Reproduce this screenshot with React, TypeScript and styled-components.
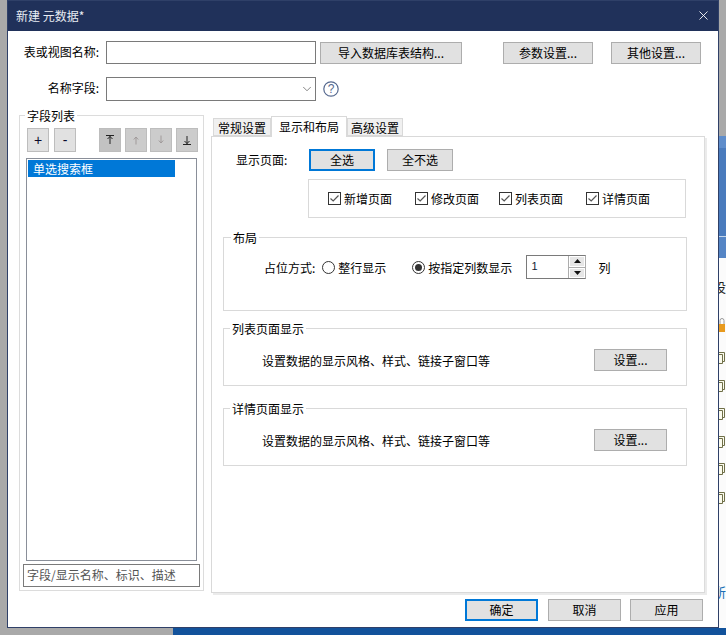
import React from 'react';
import styled, { createGlobalStyle } from 'styled-components';
import { X, ChevronDown } from 'lucide-react';

const Global = createGlobalStyle`
  html, body { margin: 0; padding: 0; width: 726px; height: 635px; overflow: hidden; background: #a9a9a9; }
  * { box-sizing: border-box; }
  body { font-family: "Noto Sans CJK SC", "Liberation Sans", sans-serif; font-size: 12px; color: #000; }
`;

const Desktop = styled.div`
  position: relative;
  width: 726px;
  height: 635px;
  background: #a9a9a9;
  overflow: hidden;
`;
const BottomBar = styled.div`
  position: absolute;
  left: 173px;
  right: 0;
  bottom: 0;
  height: 8px;
  background: #12529b;
`;
const SideStrip = styled.div`
  position: absolute;
  left: 719px;
  top: 136px;
  width: 7px;
  height: 492px;
  background: #fbfbfb;
  overflow: hidden;
  display: flex;
  flex-direction: column;
  align-items: flex-start;
`;
const SideTabs = styled.div`
  height: 12px;
  flex: none;
  width: 100%;
  background: #5f8dcb;
`;
const SideHeader = styled.div`
  height: 110px;
  flex: none;
  width: 100%;
  background: #4a7bbd;
  box-shadow: inset 0 -21px 0 #5585c5, inset 0 -22px 0 #c5d6ea;
`;
const SideGlyph = styled.span<{ $mt: number; $color: string }>`
  flex: none;
  margin: ${(p) => p.$mt}px 0 0 -6px;
  font-size: 13px;
  line-height: 14px;
  color: ${(p) => p.$color};
`;
const SideIcon = styled.svg<{ $mt: number }>`
  flex: none;
  margin-top: ${(p) => p.$mt}px;
`;

const Dialog = styled.div`
  position: absolute;
  left: 7px;
  top: 0;
  width: 712px;
  height: 628px;
  background: #fff;
  border: 1px solid #2f4068;
  display: flex;
  flex-direction: column;
`;
const TitleBar = styled.div`
  height: 30px;
  flex: none;
  background: #20315a;
  color: #e8ecf3;
  display: flex;
  align-items: center;
  justify-content: space-between;
  padding: 0 7px 2px 8px;
  font-size: 12px;
`;
const Body = styled.div`
  flex: 1;
  display: flex;
  flex-direction: column;
  padding: 10px 0 0 11px;
`;
const Row = styled.div<{ $h: number; $gap?: number }>`
  display: flex;
  align-items: center;
  height: ${(p) => p.$h}px;
  margin-bottom: ${(p) => p.$gap ?? 0}px;
`;
const FieldLabel = styled.label`
  width: 80px;
  text-align: right;
  flex: none;
  line-height: 16px;
  padding-bottom: 2px;
`;
const TextInput = styled.div`
  width: 210px;
  height: 100%;
  margin-left: 7px;
  border: 1px solid #7a7a7a;
  background: #fff;
  flex: none;
  display: flex;
  align-items: center;
  justify-content: flex-end;
  padding-right: 1px;
  color: #444;
`;
const Btn = styled.button<{ $w: number; $primary?: boolean; $ml?: number }>`
  width: ${(p) => p.$w}px;
  height: 22px;
  flex: none;
  margin: 0 0 0 ${(p) => p.$ml ?? 0}px;
  padding: 0;
  background: #e1e1e1;
  border: ${(p) => (p.$primary ? '2px solid #0078d7' : '1px solid #adadad')};
  font: inherit;
  color: #000;
  line-height: 16px;
`;
const Help = styled.svg`
  margin-left: 7px;
  flex: none;
`;
const Main = styled.div`
  display: flex;
  margin-top: 9px;
`;
const FieldsGroup = styled.div`
  position: relative;
  width: 185px;
  height: 476px;
  margin-top: 5px;
  border: 1px solid #dcdcdc;
  padding: 12px 3px 3px 3px;
  display: flex;
  flex-direction: column;
`;
const Legend = styled.span<{ $left: number }>`
  position: absolute;
  left: ${(p) => p.$left}px;
  top: -8px;
  background: #fff;
  padding: 0 2px;
  line-height: 16px;
  white-space: nowrap;
`;
const Tools = styled.div`
  display: flex;
  padding-left: 4px;
  height: 24px;
  flex: none;
`;
const ToolBtn = styled.button<{ $ml?: number; $off?: boolean; $dark?: boolean }>`
  width: 22px;
  height: 24px;
  flex: none;
  margin: 0 0 0 ${(p) => p.$ml ?? 0}px;
  padding: 0;
  background: ${(p) => (p.$dark ? '#c2c2c2' : p.$off ? '#cccccc' : '#e1e1e1')};
  border: 1px solid #bdbdbd;
  font: 400 14px "Liberation Sans", sans-serif;
  color: #0a0a2a;
  display: flex;
  align-items: center;
  justify-content: center;
`;
const List = styled.div`
  flex: 1;
  margin: 6px 3px 3px 3px;
  border: 1px solid #8a8f99;
  padding: 1px;
`;
const ListItem = styled.div`
  width: 147px;
  height: 17px;
  background: #0078d7;
  color: #fff;
  line-height: 17px;
  padding-left: 5px;
`;
const Search = styled.div`
  height: 23px;
  border: 1px solid #7a7a7a;
  padding-left: 3px;
  line-height: 20px;
  color: #555;
  flex: none;
`;
const TabsArea = styled.div`
  margin: 6px 0 0 7px;
  width: 495px;
  display: flex;
  flex-direction: column;
`;
const TabStrip = styled.div`
  display: flex;
  align-items: flex-end;
  height: 21px;
  padding-left: 2px;
  position: relative;
  z-index: 1;
  margin-bottom: -1px;
`;
const Tab = styled.div<{ $active?: boolean; $w: number }>`
  width: ${(p) => p.$w}px;
  height: ${(p) => (p.$active ? 21 : 18)}px;
  margin-bottom: ${(p) => (p.$active ? 0 : 1)}px;
  background: ${(p) => (p.$active ? '#fff' : '#f0f0f0')};
  border: 1px solid #d9d9d9;
  border-bottom: ${(p) => (p.$active ? 'none' : '1px solid #d9d9d9')};
  text-align: center;
  line-height: ${(p) => (p.$active ? 19 : 18)}px;
`;
const Panel = styled.div`
  height: 457px;
  width: 494px;
  border: 1px solid #d9d9d9;
  border-right-color: #dcdcdc;
  box-shadow: 2px 2px 0 #ebebeb;
  padding: 12px 0 0 11px;
`;
const ShowRow = styled.div`
  display: flex;
  align-items: center;
  height: 22px;
  padding-left: 13px;
`;
const ShowLabel = styled.span`
  width: 73px;
  flex: none;
  padding-bottom: 2px;
`;
const CheckBox = styled.div`
  height: 39px;
  width: 378px;
  margin: 8px 0 0 85px;
  border: 1px solid #d9d9d9;
  display: flex;
  align-items: center;
  padding-left: 19px;
`;
const CheckItem = styled.label<{ $w: number }>`
  width: ${(p) => p.$w}px;
  display: flex;
  align-items: center;
  gap: 3px;
  flex: none;
`;
const Box = styled.span`
  width: 13px;
  height: 13px;
  border: 1px solid #333;
  display: inline-flex;
  flex: none;
  background: #fff;
`;
const Section = styled.div<{ $h: number; $mt: number }>`
  position: relative;
  width: 464px;
  height: ${(p) => p.$h}px;
  margin-top: ${(p) => p.$mt}px;
  border: 1px solid #d9d9d9;
`;
const SectionRow = styled.div`
  display: flex;
  align-items: center;
  height: 22px;
  padding-left: 38px;
  margin-top: 20px;
`;
const Grow = styled.span`
  width: 332px;
  flex: none;
`;
const LayoutRow = styled.div`
  display: flex;
  align-items: center;
  height: 24px;
  margin-top: 17px;
  padding-left: 40px;
`;
const Radio = styled.span<{ $on?: boolean; $ml: number }>`
  width: 13px;
  height: 13px;
  border-radius: 50%;
  border: 1px solid #333;
  margin-left: ${(p) => p.$ml}px;
  margin-right: 3px;
  flex: none;
  display: inline-flex;
  align-items: center;
  justify-content: center;
  &::after {
    content: '';
    width: 7px;
    height: 7px;
    border-radius: 50%;
    background: ${(p) => (p.$on ? '#333' : 'transparent')};
  }
`;
const Spinner = styled.div`
  width: 60px;
  height: 24px;
  margin-left: 14px;
  border: 1px solid #7a7a7a;
  border-right-color: #adadad;
  display: flex;
  flex: none;
  font: 11px "Liberation Sans", sans-serif;
`;
const SpinVal = styled.span`
  flex: 1;
  padding: 4px 0 0 4px;
  color: #123;
`;
const SpinBtns = styled.div`
  width: 17px;
  display: flex;
  flex-direction: column;
  gap: 1px;
  padding: 0 0 0 1px;
  background: #adadad;
`;
const SpinBtn = styled.div`
  flex: 1;
  background: #e6e6e6;
  border: 1px solid #fff;
  display: flex;
  align-items: center;
  justify-content: center;
`;
const Unit = styled.span`
  margin-left: 12px;
`;
const Footer = styled.div`
  display: flex;
  margin: 6px 0 0 446px;
  height: 22px;
`;

const Check = () => (
  <Box>
    <svg width="11" height="11" viewBox="0 0 11 11">
      <path d="M1.5 5.5 L4.2 8 L9.5 2.5" fill="none" stroke="#555" strokeWidth="1.2" />
    </svg>
  </Box>
);

const Arrow = ({ kind, color }: { kind: string; color: string }) => (
  <svg width="10" height="12" viewBox="0 0 10 12" fill="none" stroke={color} strokeWidth="1">
    {kind === 'top' && <path d="M1 1.5 H9 M5 10 V2 M2.5 5 L5 2.5 L7.5 5" />}
    {kind === 'up' && <path d="M5 10.5 V3 M2.8 5.5 L5 3 L7.2 5.5" />}
    {kind === 'down' && <path d="M5 1.5 V9 M2.8 6.5 L5 9 L7.2 6.5" />}
    {kind === 'bottom' && <path d="M1 10.5 H9 M5 2 V10 M2.5 7 L5 9.5 L7.5 7" />}
  </svg>
);

const Tri = ({ up }: { up?: boolean }) => (
  <svg width="7" height="4" viewBox="0 0 7 4">
    <path d={up ? 'M3.5 0 L7 4 H0 Z' : 'M0 0 H7 L3.5 4 Z'} fill="#111" />
  </svg>
);

const DocIcon = ({ mt }: { mt: number }) => (
  <SideIcon $mt={mt} width="7" height="12" viewBox="0 0 7 12">
    <path d="M0 0.5 H5.5 V9.5 H3.5 M0 2.5 H3.5 V11.5 H0" fill="#fbfbee" stroke="#6f6f48" strokeWidth="1" />
  </SideIcon>
);

export default function App() {
  return (
    <Desktop>
      <Global />
      <BottomBar />
      <SideStrip>
        <SideTabs />
        <SideHeader />
        <SideGlyph $mt={22} $color="#222">设</SideGlyph>
        <SideIcon $mt={24} width="7" height="14" viewBox="0 0 7 14">
          <path d="M1 6 V2.5 A2 2 0 0 1 5 2.5 V6" fill="none" stroke="#9a9a9a" />
          <rect x="-1" y="6" width="7" height="8" fill="#e89a1e" />
        </SideIcon>
        <DocIcon mt={20} />
        <DocIcon mt={16} />
        <DocIcon mt={16} />
        <DocIcon mt={16} />
        <DocIcon mt={15} />
        <DocIcon mt={17} />
        <SideGlyph $mt={81} $color="#1a6fb5">所</SideGlyph>
      </SideStrip>
      <Dialog>
        <TitleBar>
          <span>新建 元数据*</span>
          <X size={15} color="#fff" strokeWidth={1.4} />
        </TitleBar>
        <Body>
          <Row $h={23} $gap={13}>
            <FieldLabel>表或视图名称:</FieldLabel>
            <TextInput />
            <Btn $w={142} $ml={4}>导入数据库表结构...</Btn>
            <Btn $w={90} $ml={41}>参数设置...</Btn>
            <Btn $w={90} $ml={18}>其他设置...</Btn>
          </Row>
          <Row $h={24}>
            <FieldLabel>名称字段:</FieldLabel>
            <TextInput>
              <ChevronDown size={14} strokeWidth={1.1} />
            </TextInput>
            <Help width="16" height="16" viewBox="0 0 16 16">
              <circle cx="8" cy="8" r="7.2" fill="none" stroke="#56698f" strokeWidth="1.2" />
              <text x="8" y="12.2" textAnchor="middle" fontSize="12" fill="#56698f" fontFamily="Liberation Sans">?</text>
            </Help>
          </Row>
          <Main>
            <FieldsGroup>
              <Legend $left={5}>字段列表</Legend>
              <Tools>
                <ToolBtn>+</ToolBtn>
                <ToolBtn $ml={5}>-</ToolBtn>
                <ToolBtn $ml={23} $dark><Arrow kind="top" color="#222" /></ToolBtn>
                <ToolBtn $ml={4} $off><Arrow kind="up" color="#a09a9a" /></ToolBtn>
                <ToolBtn $ml={3} $off><Arrow kind="down" color="#a09a9a" /></ToolBtn>
                <ToolBtn $ml={4} $off><Arrow kind="bottom" color="#222" /></ToolBtn>
              </Tools>
              <List>
                <ListItem>单选搜索框</ListItem>
              </List>
              <Search>字段/显示名称、标识、描述</Search>
            </FieldsGroup>
            <TabsArea>
              <TabStrip>
                <Tab $w={58}>常规设置</Tab>
                <Tab $w={76} $active>显示和布局</Tab>
                <Tab $w={56}>高级设置</Tab>
              </TabStrip>
              <Panel>
                <ShowRow>
                  <ShowLabel>显示页面:</ShowLabel>
                  <Btn $w={66} $primary>全选</Btn>
                  <Btn $w={66} $ml={12}>全不选</Btn>
                </ShowRow>
                <CheckBox>
                  <CheckItem $w={87}><Check />新增页面</CheckItem>
                  <CheckItem $w={84}><Check />修改页面</CheckItem>
                  <CheckItem $w={87}><Check />列表页面</CheckItem>
                  <CheckItem $w={80}><Check />详情页面</CheckItem>
                </CheckBox>
                <Section $h={74} $mt={19}>
                  <Legend $left={7}>布局</Legend>
                  <LayoutRow>
                    <span>占位方式:</span>
                    <Radio $ml={7} />
                    <span>整行显示</span>
                    <Radio $ml={26} $on />
                    <span>按指定列数显示</span>
                    <Spinner>
                      <SpinVal>1</SpinVal>
                      <SpinBtns>
                        <SpinBtn><Tri up /></SpinBtn>
                        <SpinBtn><Tri /></SpinBtn>
                      </SpinBtns>
                    </Spinner>
                    <Unit>列</Unit>
                  </LayoutRow>
                </Section>
                <Section $h={58} $mt={17}>
                  <Legend $left={6}>列表页面显示</Legend>
                  <SectionRow>
                    <Grow>设置数据的显示风格、样式、链接子窗口等</Grow>
                    <Btn $w={73}>设置...</Btn>
                  </SectionRow>
                </Section>
                <Section $h={58} $mt={22}>
                  <Legend $left={6}>详情页面显示</Legend>
                  <SectionRow>
                    <Grow>设置数据的显示风格、样式、链接子窗口等</Grow>
                    <Btn $w={73}>设置...</Btn>
                  </SectionRow>
                </Section>
              </Panel>
            </TabsArea>
          </Main>
          <Footer>
            <Btn $w={73} $primary>确定</Btn>
            <Btn $w={73} $ml={10}>取消</Btn>
            <Btn $w={73} $ml={9}>应用</Btn>
          </Footer>
        </Body>
      </Dialog>
    </Desktop>
  );
}
